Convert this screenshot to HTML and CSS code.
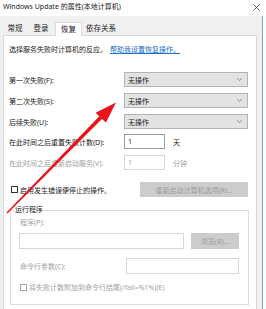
FILE: index.html
```html
<!DOCTYPE html>
<html lang="zh-CN">
<head>
<meta charset="utf-8">
<link rel="stylesheet" href="styles.css">
</head>
<body>
<div class="window">
  <div class="titlebar">
    <span class="title">Windows Update 的属性(本地计算机)</span>
    <svg class="close" width="7" height="7" viewBox="0 0 7 7"><path d="M0.5 0.5L6.5 6.5M6.5 0.5L0.5 6.5" stroke="#333" stroke-width="0.8"/></svg>
  </div>
  <div class="frame">
    <div class="tabs">
      <div class="tab t1">常规</div>
      <div class="tab t2">登录</div>
      <div class="tab t3 active">恢复</div>
      <div class="tab t4">依存关系</div>
    </div>
    <div class="panel">
      <div class="desc">选择服务失败时计算机的反应。<span class="link">帮助我设置恢复操作。</span></div>
      <div class="row r1"><span class="label">第一次失败(F):</span><div class="select"><span>无操作</span><svg width="5" height="3" viewBox="0 0 5 3"><path d="M0.3 0.3L2.5 2.5L4.7 0.3" fill="none" stroke="#666" stroke-width="0.7"/></svg></div></div>
      <div class="row"><span class="label">第二次失败(S):</span><div class="select"><span>无操作</span><svg width="5" height="3" viewBox="0 0 5 3"><path d="M0.3 0.3L2.5 2.5L4.7 0.3" fill="none" stroke="#666" stroke-width="0.7"/></svg></div></div>
      <div class="row"><span class="label">后续失败(U):</span><div class="select"><span>无操作</span><svg width="5" height="3" viewBox="0 0 5 3"><path d="M0.3 0.3L2.5 2.5L4.7 0.3" fill="none" stroke="#666" stroke-width="0.7"/></svg></div></div>
      <div class="row r4"><span class="label">在此时间之后重置失败计数(D):</span><div class="input">1</div><span class="unit">天</span></div>
      <div class="row dis"><span class="label">在此时间之后重新启动服务(V):</span><div class="input off">1</div><span class="unit">分钟</span></div>
      <div class="row r6"><span class="check"></span><span class="cblabel">启用发生错误便停止的操作。</span><div class="btn restart">重新启动计算机选项(R)...</div></div>
      <fieldset class="group">
        <legend class="legend">运行程序</legend>
        <div class="plabel">程序(P):</div>
        <div class="prow"><div class="pinput"></div><div class="btn browse">浏览(B)...</div></div>
        <div class="crow"><span class="clabel">命令行参数(C):</span><div class="cinput"></div></div>
        <div class="cbrow"><span class="check off"></span><span>将失败计数附加到命令行结尾(/fail=%1%)(E)</span></div>
      </fieldset>
    </div>
  </div>
  <svg class="arrow" width="266" height="309" viewBox="0 0 266 309">
    <polygon points="6.5,212.5 99.3,116.3 95.6,112.7 116,102.5 106,122.5 101.9,118.9 7.5,213.5" fill="#e8141b"/>
  </svg>
</div>
</body>
</html>
```

FILE: styles.css
```css
* { box-sizing: border-box; }
html, body { margin: 0; padding: 0; }
body {
  font-family: "Noto Sans", "Noto Sans CJK SC", sans-serif;
  font-size: 7px;
  color: #1a1a1a;
  background: #fff;
}
.window {
  position: relative;
  width: 266px;
  height: 309px;
  overflow: hidden;
  background: #fff;
}
.titlebar {
  height: 16px;
  display: flex;
  align-items: flex-start;
  justify-content: space-between;
  padding: 1px 6px 0 3px;
  background: #fff;
}
.title {
  font-size: 7px;
  line-height: 11px;
  color: #222;
}
.close { margin-top: 3px; }
.frame {
  width: 263px;
  height: 293px;
  background: #f0f0f0;
  border-right: 1px solid #6aaec4;
  padding: 0 5px 0 3px;
  display: flex;
  flex-direction: column;
}
.tabs {
  height: 19px;
  display: flex;
  align-items: flex-end;
  flex: none;
}
.tab {
  height: 13px;
  font-size: 7.5px;
  line-height: 13px;
  text-align: center;
  color: #222;
}
.t1 { width: 24px; }
.t2 { width: 28px; }
.t3 { width: 27px; }
.t4 { width: 38px; }
.tab.active {
  background: #fff;
  border: 1px solid #d9d9d9;
  border-bottom: none;
  height: 14px;
  margin-bottom: -1px;
  position: relative;
  z-index: 1;
  line-height: 12px;
}
.panel {
  flex: 1;
  background: #fff;
  border: 1px solid #d9d9d9;
  border-bottom: none;
  padding: 9px 7px 0 5px;
}
.desc {
  line-height: 10px;
  height: 10px;
  white-space: nowrap;
}
.link {
  color: #1a6fc4;
  text-decoration: underline;
  margin-left: 3px;
}
.row {
  display: flex;
  align-items: center;
  height: 15px;
  margin-top: 6px;
  white-space: nowrap;
}
.row.r1 { margin-top: 17px; }
.row.r4 { margin-top: 5px; }
.row.r6 { margin-top: 12px; }
.label {
  width: 115px;
  flex: none;
}
.select {
  width: 124px;
  height: 15px;
  border: 1px solid #b4b4b4;
  background: #e3e3e3;
  display: flex;
  align-items: center;
  justify-content: space-between;
  padding: 0 5px 0 3px;
}
.input {
  width: 41px;
  height: 15px;
  border: 1px solid #9a9a9a;
  background: #fff;
  padding-left: 3px;
  line-height: 13px;
}
.input.off { border-color: #d6d6d6; }
.unit { margin-left: 8px; }
.dis { color: #a0a0a0; }
.check {
  width: 7px;
  height: 7px;
  border: 1px solid #333;
  margin: 0 2px 0 2px;
  flex: none;
  background: #fff;
}
.check.off { border-color: #a8a8a8; margin: 0 2px 0 1px; }
.btn {
  height: 15px;
  background: #cccccc;
  color: #9b9b9b;
  display: flex;
  align-items: center;
  justify-content: center;
}
.restart {
  width: 108px;
  margin-left: auto;
  margin-right: 1px;
}
.group {
  margin: 8px 0 0 1px;
  padding: 3px 9px 12px 8px;
  border: 1px solid #dcdcdc;
  color: #a0a0a0;
  min-width: 0;
}
.legend {
  padding: 0 1px;
  margin-left: -5px;
  line-height: 10px;
  color: #1a1a1a;
}
.plabel {
  line-height: 10px;
  margin-left: 1px;
}
.prow {
  display: flex;
  height: 16px;
  margin-top: 5px;
}
.pinput {
  width: 165px;
  height: 16px;
  border: 1px solid #d6d6d6;
}
.browse {
  width: 48px;
  height: 16px;
  margin-left: auto;
}
.crow {
  display: flex;
  align-items: center;
  height: 16px;
  margin-top: 9px;
}
.clabel { flex: 1; margin-left: 1px; }
.cinput {
  width: 113px;
  height: 16px;
  border: 1px solid #d6d6d6;
}
.cbrow {
  display: flex;
  align-items: center;
  height: 10px;
  margin-top: 8px;
  white-space: nowrap;
}
.arrow {
  position: absolute;
  left: 0;
  top: 0;
  pointer-events: none;
}
```
